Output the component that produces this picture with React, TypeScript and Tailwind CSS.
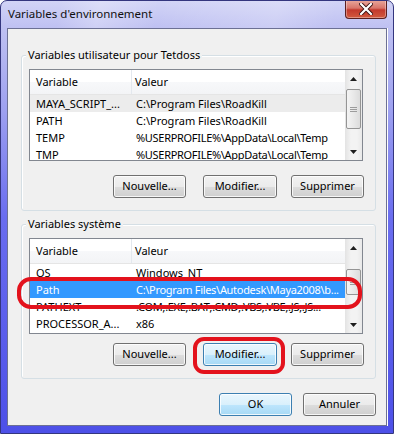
import React from 'react';

type Row = { name: string; value: string; state?: 'inactive' | 'active'; tight?: boolean };

const userVars: Row[] = [
  { name: 'MAYA_SCRIPT_...', value: 'C:\\Program Files\\RoadKill', state: 'inactive' },
  { name: 'PATH', value: 'C:\\Program Files\\RoadKill' },
  { name: 'TEMP', value: '%USERPROFILE%\\AppData\\Local\\Temp', tight: true },
  { name: 'TMP', value: '%USERPROFILE%\\AppData\\Local\\Temp', tight: true },
];

const systemVars: Row[] = [
  { name: 'OS', value: 'Windows_NT' },
  { name: 'Path', value: 'C:\\Program Files\\Autodesk\\Maya2008\\b...', state: 'active', tight: true },
  { name: 'PATHEXT', value: '.COM;.EXE;.BAT;.CMD;.VBS;.VBE;.JS;.JS...', tight: true },
  { name: 'PROCESSOR_A...', value: 'x86' },
];

function Arrow({ down }: { down?: boolean }) {
  return (
    <svg width="7" height="4" viewBox="0 0 7 4" className={down ? 'rotate-180' : ''}>
      <path d="M3.5 0 L7 4 L0 4 Z" fill="#1f1f1f" />
    </svg>
  );
}

function ScrollBar({ thumbTop, thumbHeight }: { thumbTop: number; thumbHeight: number }) {
  return (
    <div className="w-[17px] shrink-0 flex flex-col bg-[linear-gradient(90deg,#e3e3e3,#f3f3f3_35%,#f3f3f3_70%,#e9e9e9)]">
      <div className="h-[17px] shrink-0 flex items-center justify-center">
        <Arrow />
      </div>
      <div className="flex-1 relative">
        <div
          className="absolute left-[1px] right-[1px] rounded-[2px] border border-[#959595] bg-[linear-gradient(90deg,#f4f4f4,#e9e9e9_50%,#dcdcdc)] flex flex-col items-center justify-center gap-[1px]"
          style={{ top: thumbTop, height: thumbHeight }}
        >
          <div className="w-[7px] h-[1px] bg-[#9c9c9c]" />
          <div className="w-[7px] h-[1px] bg-[#9c9c9c]" />
          <div className="w-[7px] h-[1px] bg-[#9c9c9c]" />
        </div>
      </div>
      <div className="h-[17px] shrink-0 flex items-center justify-center">
        <Arrow down />
      </div>
    </div>
  );
}

function ListView({ rows, height, thumbTop, thumbHeight }: { rows: Row[]; height: string; thumbTop: number; thumbHeight: number }) {
  return (
    <div className={`ml-[7px] w-[334px] ${height} border border-[#828790] bg-white flex overflow-hidden`}>
      <div className="flex-1 flex flex-col overflow-hidden">
        <div className="h-[25px] shrink-0 flex border-b border-[#e5e5e5] bg-[linear-gradient(#ffffff,#ffffff_50%,#f7f8fa_50%,#f3f4f6)]">
          <div className="w-[102px] shrink-0 pl-[6px] flex items-center border-r border-[#e3e8ee]">Variable</div>
          <div className="flex-1 pl-[3px] flex items-center">Valeur</div>
        </div>
        <div className="flex flex-col">
          {rows.map((r) => (
            <div
              key={r.name}
              className={`h-[17px] shrink-0 flex items-center whitespace-nowrap leading-[15px] ${
                r.state === 'active'
                  ? 'bg-[#3399ff] text-white'
                  : r.state === 'inactive'
                  ? 'bg-[#ececec]'
                  : ''
              }`}
            >
              <div className="w-[103px] shrink-0 pl-[6px] overflow-hidden">{r.name}</div>
              <div className={`flex-1 pl-[3px] overflow-hidden ${r.tight ? 'tracking-[-0.3px]' : ''}`}>{r.value}</div>
            </div>
          ))}
        </div>
      </div>
      <ScrollBar thumbTop={thumbTop} thumbHeight={thumbHeight} />
    </div>
  );
}

function Button({ label, width, hot, className = '' }: { label: string; width: string; hot?: boolean; className?: string }) {
  return (
    <div
      className={`${width} h-[23px] shrink-0 rounded-[3px] border flex items-center justify-center shadow-[inset_0_0_0_1px_rgba(255,255,255,0.8)] ${
        hot
          ? 'border-[#3c7fb1] bg-[linear-gradient(#eaf6fd,#d9f0fc_50%,#bee6fd_50%,#a7d9f5)]'
          : 'border-[#707070] bg-[linear-gradient(#f2f2f2,#ebebeb_50%,#dddddd_50%,#cfcfcf)]'
      } ${className}`}
    >
      {label}
    </div>
  );
}

function ButtonRow({ hotModify, className }: { hotModify?: boolean; className: string }) {
  return (
    <div className={`flex ${className}`}>
      <Button label="Nouvelle..." width="w-[73px]" className="ml-[91px]" />
      <Button label="Modifier..." width="w-[74px]" className="ml-[17px]" hot={hotModify} />
      <Button label="Supprimer" width="w-[73px]" className="ml-[14px]" />
    </div>
  );
}

function GroupBox({ title, className, children }: { title: string; className: string; children: React.ReactNode }) {
  return (
    <div className={`relative ml-[13px] w-[355px] rounded-[3px] border border-[#d5dfe5] shadow-[inset_1px_1px_0_#ffffff] ${className}`}>
      <span className="absolute left-[4px] top-[-9px] px-[2px] leading-[16px] bg-[#f0f0f0]">{title}</span>
      {children}
    </div>
  );
}

export default function App() {
  return (
    <div className="relative w-[394px] h-[434px] overflow-hidden rounded-t-[7px] border border-[#34367e] bg-[linear-gradient(180deg,#d2d4f6_0%,#bfc1f2_6%,#9ea1f0_25%,#6a6def_50%,#4d50e8_100%)] flex flex-col font-['Noto_Sans',sans-serif] text-[11px] text-black">
      <div className="h-[27px] shrink-0 flex items-start justify-between bg-[linear-gradient(100deg,transparent_15%,rgba(255,255,255,0.25)_25%,transparent_40%,rgba(255,255,255,0.2)_70%,transparent_85%)]">
        <span className="pl-[7px] pt-[5px] text-[11.5px] leading-[16px] text-[#111]">Variables d'environnement</span>
        <div className="-mt-[1px] mr-[6px] w-[42px] h-[19px] rounded-b-[4px] border border-[#5a1f1f] border-t-0 bg-[linear-gradient(#e9a99d,#d8756a_45%,#c3392c_55%,#d25a3f)] flex items-center justify-center shadow-[inset_0_0_0_1px_rgba(255,255,255,0.35)]">
          <svg width="14" height="12" viewBox="0 0 14 12">
            <path d="M2 1 L12 11 M12 1 L2 11" stroke="#3a1010" strokeWidth="4" strokeLinecap="square" />
            <path d="M2 1 L12 11 M12 1 L2 11" stroke="#ffffff" strokeWidth="2.2" strokeLinecap="square" />
          </svg>
        </div>
      </div>

      <div className="mx-[6px] h-[398px] shrink-0 border border-[#6c7094] bg-[#f0f0f0] flex flex-col shadow-[1px_0_0_#ffffff]">
        <GroupBox title="Variables utilisateur pour Tetdoss" className="mt-[26px] h-[156px]">
          <div className="mt-[13px]">
            <ListView rows={userVars} height="h-[92px]" thumbTop={2} thumbHeight={40} />
          </div>
          <ButtonRow className="mt-[14px]" />
        </GroupBox>

        <GroupBox title="Variables système" className="mt-[13px] h-[155px]">
          <div className="mt-[13px]">
            <ListView rows={systemVars} height="h-[96px]" thumbTop={13} thumbHeight={26} />
          </div>
          <ButtonRow className="mt-[9px]" hotModify />
        </GroupBox>

        <div className="mt-[14px] flex justify-end pr-[10px] gap-[11px]">
          <Button label="OK" width="w-[73px]" hot />
          <Button label="Annuler" width="w-[73px]" />
        </div>
      </div>

      <div className="absolute left-[16px] top-[276px] w-[345px] h-[32px] rounded-[14px] border-[4px] border-[#e3121c]" />
      <div className="absolute left-[192px] top-[336px] w-[92px] h-[37px] rounded-[11px] border-[4px] border-[#e3121c]" />
    </div>
  );
}
